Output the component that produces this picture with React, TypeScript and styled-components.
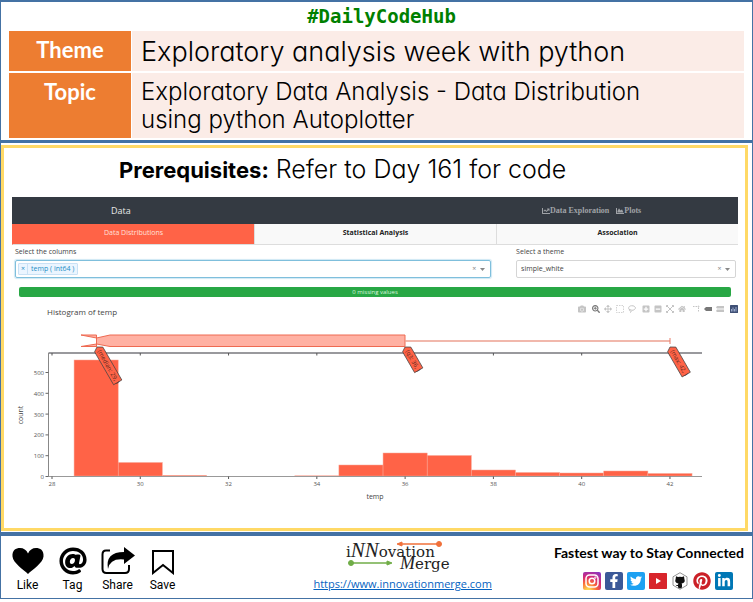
import React from "react";
import styled, { createGlobalStyle } from "styled-components";
import {
  FaAt, FaCamera, FaChartArea, FaChartLine, FaFacebookF, FaHome,
  FaLinkedinIn, FaMinusSquare, FaArrowsAlt, FaPinterest, FaPlusSquare, FaSearchPlus, FaTwitter,
} from "react-icons/fa";

const blue = "#4472a4";
const tomato = "#ff6347";

const GlobalStyle = createGlobalStyle`
  * { box-sizing: border-box; }
  body { margin: 0; background: #fff; color: #000; }
  button, input, select { font: inherit; color: inherit; margin: 0; padding: 0; border: 0; background: none; }
  button { cursor: pointer; }
`;

const Page = styled.div`
  display: flex;
  flex-direction: column;
  border: 1px solid ${blue};
  border-top-width: 2px;
`;

const Header = styled.header`
  padding: 1px 8px 0;
  border-bottom: 3px solid ${blue};
`;

const HashTag = styled.h1`
  margin: 0;
  padding-left: 10px;
  text-align: center;
  font: bold 19px/26px "DejaVu Sans Mono", monospace;
  padding-bottom: 2px;
  color: #008000;
`;

const TopicTable = styled.table`
  width: 100%;
  border-spacing: 0;
  table-layout: fixed;
`;

const HeadCell = styled.th`
  width: 123px;
  padding: 5px 0;
  vertical-align: top;
  background: #ed7d31;
  background-clip: padding-box;
  border-right: 1px solid #fff;
  border-bottom: 2px solid #fff;
  color: #fff;
  font: bold 22px/28px Lato, sans-serif;
`;

const TextCell = styled.td<{ $large?: boolean }>`
  padding: ${(p) => (p.$large ? "2px 9px 0" : "5px 9px 4px")};
  vertical-align: top;
  background: #fbece7;
  background-clip: padding-box;
  border-bottom: 2px solid #fff;
  font: ${(p) => (p.$large ? "27px/38px" : "24px/28px")} "Century Gothic", Inter, sans-serif;
  font-weight: 300;
  font-feature-settings: "cv11";
`;

const Content = styled.main`
  margin: 2px 4px 1px 0;
  padding: 4px 7px 16px 8px;
  border: 3px solid #ffd966;
`;

const Prerequisites = styled.h2`
  margin: 0;
  padding: 0 107px 10px;
  font: 25px/34px "Century Gothic", Inter, sans-serif;
  font-weight: 300;
  font-feature-settings: "cv11";
  white-space: nowrap;
  b { font-size: 22px; font-weight: 700; }
`;

const Dashboard = styled.section`
  font: 7px/10px "Open Sans", sans-serif;
  color: #444;
`;

const NavBar = styled.nav`
  display: grid;
  grid-template-columns: 30% 1fr 27%;
  align-items: center;
  height: 27px;
  background: #343a42;
  color: #fff;
`;

const Brand = styled.a`
  text-align: center;
  font-size: 9px;
  color: #e8e8e8;
  text-decoration: none;
`;

const NavLinks = styled.div`
  grid-column: 3;
  display: flex;
  gap: 7px;
`;

const NavLink = styled.a`
  display: flex;
  align-items: center;
  color: #a0a3a7;
  font: bold 8px/10px "Liberation Serif", serif;
  text-decoration: none;
  white-space: nowrap;
`;

const Tabs = styled.div`
  display: grid;
  grid-template-columns: repeat(3, 1fr);
`;

const Tab = styled.button<{ $active?: boolean }>`
  height: 21px;
  padding-bottom: 3px;
  border-bottom: 1px solid #ddd;
  border-left: 1px solid ${(p) => (p.$active ? tomato : "#ddd")};
  background: ${(p) => (p.$active ? tomato : "#f9f9f9")};
  color: ${(p) => (p.$active ? "#ffe1db" : "#222")};
  font-weight: ${(p) => (p.$active ? 400 : 700)};
`;

const Filters = styled.div`
  display: grid;
  grid-template-columns: 66% 30.5%;
  justify-content: space-between;
  padding: 2px 2px 0 3px;
`;

const Field = styled.div`
  display: flex;
  flex-direction: column;
  gap: 3px;
`;

const SelectBox = styled.div<{ $focused?: boolean }>`
  display: flex;
  align-items: center;
  height: 18px;
  padding: 0 5px 0 2px;
  border: 1px solid ${(p) => (p.$focused ? "#7fbfdc" : "#d5d5d5")};
  border-radius: 2px;
  box-shadow: ${(p) => (p.$focused ? "0 0 1px 1px #cfe8f4" : "none")};
`;

const Chip = styled.span`
  display: flex;
  height: 12px;
  border: 1px solid #c9e1f5;
  border-radius: 1px;
  background: #ebf5ff;
  color: #1e8fc6;
  span { padding: 0 3px; }
`;

const ChipRemove = styled.button`
  width: 9px;
  border-right: 1px solid #c9e1f5;
`;

const SearchInput = styled.input`
  flex: 1;
  min-width: 0;
  outline: none;
`;

const ThemeSelect = styled.select`
  flex: 1;
  min-width: 0;
  padding-left: 2px;
  appearance: none;
`;

const ClearButton = styled.button`
  width: 9px;
  color: #888;
`;

const Caret = styled.svg`
  width: 5px;
  height: 3px;
  margin-left: 1px;
  fill: #888;
`;

const Missing = styled.div`
  margin: 9px 7px 6px;
  border-radius: 2px;
  background: #28a745;
  color: #d8f5de;
  font-size: 6px;
  text-align: center;
`;

const ChartHeader = styled.div`
  display: flex;
  align-items: center;
  justify-content: space-between;
  padding-left: 35px;
`;

const ChartTitle = styled.h3`
  margin: 0;
  font: 8px/17px "Open Sans", sans-serif;
`;

const ModeBar = styled.div`
  display: flex;
  gap: 2px;
  align-self: flex-start;
`;

const ModeGroup = styled.div`
  display: flex;
`;

const ModeButton = styled.button<{ $active?: boolean; $brand?: boolean }>`
  display: flex;
  width: ${(p) => (p.$brand ? 10 : 12)}px;
  height: 12px;
  align-items: center;
  justify-content: ${(p) => (p.$brand ? "flex-end" : "center")};
  color: ${(p) => (p.$active ? "#777" : "#c4c4c4")};
  svg { width: 8px; height: 8px; }
`;

const Chart = styled.svg`
  display: block;
  width: 100%;
  font-family: "Open Sans", sans-serif;
`;

const Footer = styled.footer`
  display: grid;
  grid-template-columns: 40% 27% 1fr;
  min-height: 66px;
  padding: 4px 8px 0 9px;
  border-top: 4px solid ${blue};
`;

const Actions = styled.div`
  display: flex;
  gap: 10px;
  padding-top: 7px;
`;

const Action = styled.button`
  display: flex;
  flex-direction: column;
  align-items: center;
  width: 35px;
  font: 12px/20px Roboto, sans-serif;
  svg { width: 34px; height: 28px; }
`;

const Center = styled.div`
  display: flex;
  flex-direction: column;
  align-items: center;
`;

const Logo = styled.svg`
  width: 120px;
  height: 35px;
  overflow: visible;
`;

const SiteLink = styled.a`
  color: #0563c1;
  font: 11px/18px "Open Sans", sans-serif;
`;

const Connect = styled.div`
  display: flex;
  flex-direction: column;
  align-items: flex-end;
  gap: 9px;
`;

const ConnectTitle = styled.strong`
  padding-top: 3px;
  font: bold 14px/20px Lato, sans-serif;
  white-space: nowrap;
`;

const Socials = styled.div`
  display: flex;
  gap: 4px;
  padding-right: 11px;
`;

const Social = styled.a<{ $bg?: string; $fg: string; $size: number }>`
  display: flex;
  align-items: center;
  justify-content: center;
  width: 18px;
  height: 18px;
  border-radius: 2px;
  background: ${(p) => p.$bg || "none"};
  color: ${(p) => p.$fg};
  svg { width: ${(p) => p.$size}px; height: ${(p) => p.$size}px; }
`;

const line = { fill: "none", stroke: "currentColor", strokeWidth: 1.5 };

const modeGroups: { label: string; icon: React.ReactNode; active?: boolean }[][] = [
  [{ label: "Download plot", icon: <FaCamera /> }],
  [
    { label: "Zoom", icon: <FaSearchPlus />, active: true },
    { label: "Pan", icon: <FaArrowsAlt /> },
    { label: "Box select", icon: <svg viewBox="0 0 16 16" {...line}><rect x="1" y="1" width="14" height="14" strokeDasharray="3 2" /></svg> },
    { label: "Lasso select", icon: <svg viewBox="0 0 16 16" {...line} strokeWidth={2}><path d="M4 10C0 8 0 2 7 1.500S17 6 13 9 6 10 4 9s-2 3 1 3 1 3-1 3" /></svg> },
  ],
  [
    { label: "Zoom in", icon: <FaPlusSquare /> },
    { label: "Zoom out", icon: <FaMinusSquare /> },
    { label: "Autoscale", icon: <svg viewBox="0 0 16 16" {...line} strokeWidth={2}><path d="M1 4V1h3M12 1h3v3M15 12v3h-3M4 15H1v-3M1 1l14 14M15 1L1 15" /></svg> },
    { label: "Reset axes", icon: <FaHome /> },
  ],
  [
    { label: "Toggle spike lines", icon: <svg viewBox="0 0 16 16" {...line} strokeWidth={2}><path d="M2 3h8M13 5v10" strokeDasharray="3 2" /><circle cx="13" cy="3" r="1" /></svg> },
    { label: "Show closest data", icon: <svg viewBox="0 0 16 16" fill="currentColor"><path d="M0 8l4-4h12v8H4z" /></svg>, active: true },
    { label: "Compare data", icon: <svg viewBox="0 0 16 16" fill="currentColor"><path d="M0 5l2-3h14v5H2zM0 12l2-3h14v5H2z" /></svg> },
  ],
];

const unit = 44.14;
const px = (v: number) => 40 + (v - 28) * unit;
const base = 156;
const bars = [
  [29, 116], [30, 13.5], [31, 0.7], [34, 0.2], [35, 11], [36, 23], [37, 20.5],
  [38, 6], [39, 3.5], [40, 3], [41, 5], [42, 2.5],
];
const tags = [
  { x: 85, len: 41, text: "(median: 29, )" },
  { x: 393, len: 27, text: "(q3: 36, )" },
  { x: 658, len: 32, text: "(max: 42, )" },
];

function Histogram() {
  return (
    <Chart viewBox="0 0 726 192" role="img" aria-label="Histogram of temp">
      <g fill={tomato} fillOpacity="0.5" stroke="#ee6a52">
        <path d="M69 15L84.500 18V15ZM69 26.500L84.500 24V26.500Z" />
        <path d="M84.500 18L98 15H393V26.500H98L84.500 24Z" />
      </g>
      <path d="M84.500 15v12" stroke="#ee6a52" />
      <path d="M393 21H658" stroke="#eca091" strokeWidth="1.500" />
      <path d="M658 18v6" stroke="#e77d69" />
      <g fill={tomato} stroke="#f8a898" strokeWidth="0.500">
        {bars.map(([v, h]) => <rect key={v} x={px(v - 0.5)} y={base - h} width={unit} height={h} />)}
      </g>
      <path d="M36.500 33H690" stroke="#77777c" strokeWidth="1.500" />
      <path d="M36.500 33V156.500" stroke="#888" />
      <path d="M36.500 156.500H690" stroke="#999" />
      {[28, 30, 32, 34, 36, 38, 40, 42].map((v) => (
        <g key={v}>
          <path d={`M${px(v)} 33v2.500M${px(v)} 156.500v2.500`} stroke="#555" />
          <text x={px(v)} y="166" fontSize="6" textAnchor="middle" fill="#555">{v}</text>
        </g>
      ))}
      {[0, 100, 200, 300, 400, 500].map((v) => (
        <g key={v}>
          <path d={`M33.500 ${156.5 - v * 0.208}h3`} stroke="#666" />
          <text x="32" y={159 - v * 0.208} fontSize="6" textAnchor="end" fill="#555">{v}</text>
        </g>
      ))}
      <text x="363" y="179" fontSize="7" textAnchor="middle" fill="#444">temp</text>
      <text transform="translate(11 95) rotate(-90)" fontSize="7" textAnchor="middle" fill="#444">count</text>
      {tags.map((t) => (
        <g key={t.text} transform={`translate(${t.x} 27) rotate(60)`}>
          <path d={`M0 0L3-5H${t.len}V4.500H3Z`} fill={tomato} stroke="#444" strokeWidth="0.700" />
          <text x="4" y="2" fontSize="6" fill="#5c2a20">{t.text}</text>
        </g>
      ))}
    </Chart>
  );
}

const Arrow = () => <Caret viewBox="0 0 10 6" aria-hidden="true"><path d="M0 0h10L5 6z" /></Caret>;

const actions = [
  {
    label: "Like",
    icon: (
      <svg viewBox="0 0 34 28">
        <path d="M17 27C13 23 2 16 1.500 9.500 1 3 5 1 9 1q5.500 0 8 5.500Q19.500 1 25 1c4 0 8 2 7.500 8.500C32 16 21 23 17 27Z" />
      </svg>
    ),
  },
  { label: "Tag", icon: <FaAt /> },
  {
    label: "Share",
    icon: (
      <svg viewBox="0 0 34 28">
        <path d="M9 3.500H5Q1.500 3.500 1.500 7.500v14.500q0 4 4 4h18.500q4 0 4-4v-4" fill="none" stroke="#000" strokeWidth="2" />
        <path d="M7 22Q4 5 23 5V0l11 8.500-11 8.500v-4.500Q9 11 7 22Z" />
      </svg>
    ),
  },
  { label: "Save", icon: <svg viewBox="0 0 34 28"><path d="M7 4h20v22l-10-8-10 8Z" fill="none" stroke="#000" strokeWidth="2" /></svg> },
];

const HexCat = () => (
  <svg viewBox="0 0 18 18">
    <path d="M9 .7L16 4.800v8.400L9 17.300 2 13.200V4.800Z" fill="#fff" stroke="#777" strokeWidth=".8" />
    <path d="M5 4.200l2 .9q2-.5 4 0l2-.9.3 2.200q1.500 4.600-2.700 5.100l.4 1v3L9 16.500l-2-1v-1.600q-1.800.2-2.500-1.500 1.300.9 2.500.4l.4-1.300Q3.200 11 4.700 6.400Z" fill="#111" />
  </svg>
);

const Play = () => (
  <svg viewBox="0 0 18 18"><path d="M7 6l5 3-5 3z" fill="#fff" /></svg>
);

const InstaMark = () => (
  <svg viewBox="0 0 18 18" fill="none" stroke="#fff" strokeWidth="1.500">
    <rect x="3" y="3" width="12" height="12" rx="3.500" />
    <circle cx="9" cy="9" r="2.800" />
    <circle cx="12.400" cy="5.600" r=".4" />
  </svg>
);

const socials = [
  { label: "Instagram", icon: <InstaMark />, fg: "#fff", size: 18, bg: "radial-gradient(circle at 28% 105%, #fdd24f 0 10%, #fa6b38 38%, #d62976 62%, #8537c7 95%)" },
  { label: "Facebook", icon: <FaFacebookF />, fg: "#fff", size: 14, bg: "#3b5998" },
  { label: "Twitter", icon: <FaTwitter />, fg: "#fff", size: 12, bg: "#1da1f2" },
  { label: "YouTube", icon: <Play />, fg: "#fff", size: 18, bg: "linear-gradient(#fff 1px, #d8252b 1px 17px, #fff 17px)" },
  { label: "GitHub", icon: <HexCat />, fg: "#111", size: 18 },
  { label: "Pinterest", icon: <FaPinterest />, fg: "#cb2027", size: 18 },
  { label: "LinkedIn", icon: <FaLinkedinIn />, fg: "#fff", size: 14, bg: "#0077b5" },
];

export default function App() {
  return (
    <>
      <GlobalStyle />
      <Page>
        <Header>
          <HashTag>#DailyCodeHub</HashTag>
          <TopicTable>
            <tbody>
              <tr>
                <HeadCell scope="row">Theme</HeadCell>
                <TextCell $large>Exploratory analysis week with python</TextCell>
              </tr>
              <tr>
                <HeadCell scope="row">Topic</HeadCell>
                <TextCell>Exploratory Data Analysis - Data Distribution<br />using python Autoplotter</TextCell>
              </tr>
            </tbody>
          </TopicTable>
        </Header>
        <Content>
          <Prerequisites><b>Prerequisites:</b> Refer to Day 161 for code</Prerequisites>
          <Dashboard>
            <NavBar>
              <Brand href="#data">Data</Brand>
              <NavLinks>
                <NavLink href="#exploration"><FaChartLine />Data Exploration</NavLink>
                <NavLink href="#plots"><FaChartArea />Plots</NavLink>
              </NavLinks>
            </NavBar>
            <Tabs role="tablist">
              <Tab role="tab" aria-selected="true" $active>Data Distributions</Tab>
              <Tab role="tab" aria-selected="false">Statistical Analysis</Tab>
              <Tab role="tab" aria-selected="false">Association</Tab>
            </Tabs>
            <Filters>
              <Field>
                <label htmlFor="columns">Select the columns</label>
                <SelectBox $focused>
                  <Chip><ChipRemove aria-label="Remove temp">×</ChipRemove><span>temp ( int64 )</span></Chip>
                  <SearchInput id="columns" />
                  <ClearButton aria-label="Clear columns">×</ClearButton>
                  <Arrow />
                </SelectBox>
              </Field>
              <Field>
                <label htmlFor="theme">Select a theme</label>
                <SelectBox>
                  <ThemeSelect id="theme" defaultValue="simple_white"><option>simple_white</option></ThemeSelect>
                  <ClearButton aria-label="Clear theme">×</ClearButton>
                  <Arrow />
                </SelectBox>
              </Field>
            </Filters>
            <Missing>0 missing values</Missing>
            <ChartHeader>
              <ChartTitle>Histogram of temp</ChartTitle>
              <ModeBar>
                {modeGroups.map((group) => (
                  <ModeGroup key={group[0].label}>
                    {group.map((m) => <ModeButton key={m.label} aria-label={m.label} $active={m.active}>{m.icon}</ModeButton>)}
                  </ModeGroup>
                ))}
                <ModeButton $brand aria-label="Produced with Plotly">
                  <svg viewBox="0 0 16 16"><rect width="16" height="16" rx="1" fill="#3f4f75" /><path d="M3 13V8M6 13V5M9 13V8M12 13V4" stroke="#b9c9ea" strokeWidth="1.500" /></svg>
                </ModeButton>
              </ModeBar>
            </ChartHeader>
            <Histogram />
          </Dashboard>
        </Content>
        <Footer>
          <Actions>
            {actions.map((a) => <Action key={a.label}>{a.icon}{a.label}</Action>)}
          </Actions>
          <Center>
            <Logo viewBox="0 0 120 35" role="img" aria-label="iNNovation Merge">
              <g fontFamily="DejaVu Serif, serif" fontSize="15" fill="#222">
                <text x="3" y="17">i<tspan fontFamily="Liberation Serif, serif" fontStyle="italic" fontSize="21">NN</tspan>ovation</text>
                <text x="57" y="29"><tspan fontFamily="Liberation Serif, serif" fontStyle="italic" fontSize="18">M</tspan>erge</text>
              </g>
              <g stroke="#f0703a" fill="#f0703a"><path d="M58 4H96" strokeWidth="1.500" /><path d="M54 4l5-2v4z" /><circle cx="96" cy="4" r="2.500" /></g>
              <g stroke="#70ad47" fill="#70ad47"><path d="M8 23H45" strokeWidth="1.500" /><path d="M49 23l-5-2v4z" /><circle cx="8" cy="23" r="2.500" /></g>
            </Logo>
            <SiteLink href="https://www.innovationmerge.com">https://www.innovationmerge.com</SiteLink>
          </Center>
          <Connect>
            <ConnectTitle>Fastest way to Stay Connected</ConnectTitle>
            <Socials>
              {socials.map((s) => (
                <Social key={s.label} href={`#${s.label.toLowerCase()}`} aria-label={s.label} $bg={s.bg} $fg={s.fg} $size={s.size}>{s.icon}</Social>
              ))}
            </Socials>
          </Connect>
        </Footer>
      </Page>
    </>
  );
}
